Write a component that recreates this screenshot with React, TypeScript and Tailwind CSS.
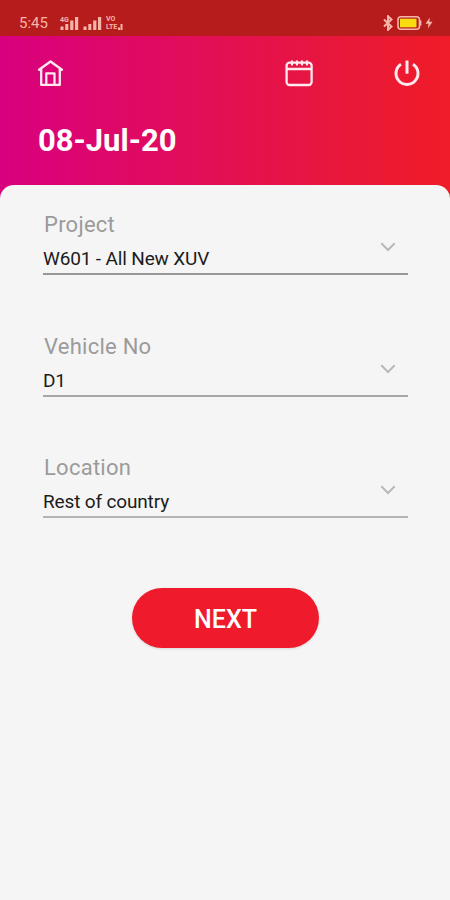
import React from "react";

interface Field {
  label: string;
  value: string;
  line: string;
}

const fields: Field[] = [
  { label: "Project", value: "W601 - All New XUV", line: "bg-[#989898]" },
  { label: "Vehicle No", value: "D1", line: "bg-[#a6a6a6]" },
  { label: "Location", value: "Rest of country", line: "bg-[#b4b4b4]" },
];

const Signal = () => (
  <svg width="19" height="15" viewBox="0 0 19 15" fill="currentColor">
    <rect x="0.5" y="10.5" width="3" height="3.5" />
    <rect x="5.3" y="8" width="3" height="6" />
    <rect x="10.2" y="4.5" width="3.2" height="9.5" />
    <rect x="15" y="1" width="3.2" height="13" />
  </svg>
);

const StatusBar = () => (
  <div className="flex h-[36px] items-end justify-between bg-[#b71c1c] pl-[19px] pr-[17px] pb-[5px] text-[#f5b5a8]">
    <div className="flex items-end">
      <span className="w-[41px] translate-y-px text-[15px] leading-[17px]">
        5:45
      </span>
      <div className="relative">
        <Signal />
        <span className="absolute left-0 top-0 bg-[#b71c1c] text-[7px] font-bold leading-[8px]">
          4G
        </span>
      </div>
      <div className="ml-[4px]">
        <Signal />
      </div>
      <div className="ml-[4px] text-[7px] font-bold leading-[8px]">
        <div>VO</div>
        <div className="flex items-end">
          LTE
          <svg
            className="mb-px ml-px"
            width="5"
            height="6"
            viewBox="0 0 5 6"
            fill="currentColor"
          >
            <path d="M0 3.5h2V6H0zM2.5 0h2v6h-2z" />
          </svg>
        </div>
      </div>
    </div>
    <div className="flex items-center">
      <svg
        width="10"
        height="16"
        viewBox="0 0 10 16"
        fill="none"
        stroke="currentColor"
        strokeWidth="2"
      >
        <path d="M1 4.5 8.5 11.5 5 14.8V1.2L8.5 4.5 1 11.5" />
      </svg>
      <svg
        className="ml-[4px]"
        width="26"
        height="16"
        viewBox="0 0 26 16"
        fill="none"
      >
        <rect
          x="1"
          y="1.7"
          width="21.5"
          height="12.6"
          rx="3"
          stroke="currentColor"
          strokeWidth="1.6"
        />
        <rect x="3" y="3.7" width="16.5" height="8.6" fill="#f9dc10" />
        <path d="M23.6 5.5v5" stroke="currentColor" strokeWidth="1.6" />
      </svg>
      <svg
        className="ml-[2px]"
        width="8"
        height="14"
        viewBox="0 0 8 14"
        fill="currentColor"
      >
        <path d="M4.8 1.5 .5 7.8h3l-.6 4.7 4.6-6.7H4.3z" />
      </svg>
    </div>
  </div>
);

const HomeIcon = () => (
  <svg
    width="28"
    height="28"
    viewBox="0 0 28 28"
    fill="none"
    stroke="currentColor"
    strokeWidth="2.3"
    strokeLinecap="round"
    strokeLinejoin="round"
  >
    <path d="M5.2 10.8H3L14.5 2.5 26 10.8h-2.2" />
    <path d="M5.2 10.8v15.1h18.6V10.8" />
    <path d="M10.3 25.5V14.4h8.2v11.1" />
  </svg>
);

const CalendarIcon = () => (
  <svg
    width="28"
    height="28"
    viewBox="0 0 28 28"
    fill="none"
    stroke="currentColor"
    strokeWidth="2.3"
    strokeLinecap="round"
  >
    <rect x="1.6" y="3.6" width="25" height="22.4" rx="3" />
    <path d="M2 10h24M7 2.4v3.2M12 2.4v3.2M17 2.4v3.2M22 2.4v3.2" />
  </svg>
);

const PowerIcon = () => (
  <svg
    width="28"
    height="28"
    viewBox="0 0 28 28"
    fill="none"
    stroke="currentColor"
    strokeWidth="3"
  >
    <path d="M14 1.5v13.2" />
    <path d="M8 5.2a11 11 0 1 0 12 0" />
  </svg>
);

const SelectField = ({ label, value, line }: Field) => (
  <div className="h-[121.7px]">
    <div className="flex h-[62px] items-start justify-between">
      <div>
        <div className="pl-px text-[22px] leading-[28px] tracking-[0.25px] text-[#9b9b9b]">
          {label}
        </div>
        <div className="mt-[8px] text-[19px] leading-[24px] tracking-[-0.15px] text-[#1c1c1c]">
          {value}
        </div>
      </div>
      <svg
        className="mr-[12px] mt-[31px]"
        width="16"
        height="10"
        viewBox="0 0 16 10"
        fill="none"
        stroke="#b9b9b9"
        strokeWidth="2"
      >
        <path d="M1.3 1.3 8 8l6.7-6.7" />
      </svg>
    </div>
    <div className={`h-[2px] ${line}`} />
  </div>
);

const App = () => {
  return (
    <div className="flex h-[900px] w-[450px] flex-col overflow-hidden bg-[linear-gradient(to_right,#d9007f_0%,#e30f55_48%,#e8173b_75%,#f01c28_100%)] font-['Roboto',sans-serif]">
      <StatusBar />
      <header className="h-[149px] text-white">
        <div className="flex pl-[36px] pt-[23px] text-[#ffe9ee]">
          <HomeIcon />
          <div className="ml-[221px]">
            <CalendarIcon />
          </div>
          <div className="ml-[80px]">
            <PowerIcon />
          </div>
        </div>
        <h1 className="mt-[34px] pl-[38px] text-[31px] font-bold leading-[40px]">
          08-Jul-20
        </h1>
      </header>
      <main className="flex-1 rounded-t-[14px] bg-[#f5f5f5] pl-[43px] pr-[42px] pt-[26px]">
        {fields.map((field) => (
          <SelectField key={field.label} {...field} />
        ))}
        <button className="ml-[89px] mt-[12px] h-[60px] w-[187px] rounded-full bg-[#ef1b2d] pt-[3px] text-[25px] font-medium text-white shadow-sm">
          NEXT
        </button>
      </main>
    </div>
  );
};

export default App;
